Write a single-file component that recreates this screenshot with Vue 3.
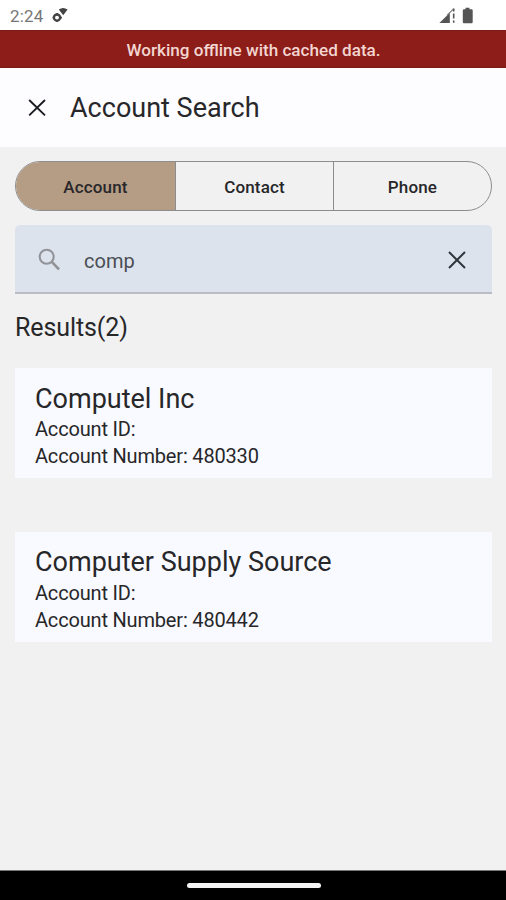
<script setup>
import { ref } from 'vue'

const tabs = ['Account', 'Contact', 'Phone']
const active = ref('Account')
const query = ref('comp')
const results = [
  { name: 'Computel Inc', id: '', number: '480330' },
  { name: 'Computer Supply Source', id: '', number: '480442' },
]
</script>

<template>
  <div class="screen">
    <div class="status">
      <span class="time">2:24</span>
      <svg class="tool" width="18" height="18" viewBox="0 0 18 18">
        <circle cx="6" cy="10.6" r="3.1" fill="none" stroke="#444" stroke-width="2.3" />
        <path d="M6 6v2M6 13v2M1.6 10.6h2M9 10.6h2" stroke="#444" stroke-width="1.6" />
        <path d="M7.8 2.6Q12 -.6 16.6 2.6L12.2 8.2Z" fill="#444" />
      </svg>
      <div class="spacer"></div>
      <svg class="signal" width="18" height="18" viewBox="0 0 18 18">
        <path d="M.4 16L10.8 5.8V16Z" fill="#555" />
        <path d="M8 8.4L14.6 1.8" stroke="#777" stroke-width="1.1" />
        <path d="M14.7 1.6v2.8M14.7 6.5v5M14.7 13.5v2.3" stroke="#555" stroke-width="1.6" />
      </svg>
      <svg class="battery" width="12" height="18" viewBox="0 0 12 18">
        <path d="M3.5 .8h4v1.5H9.5Q10.7 2.3 10.7 3.5V15Q10.7 16.2 9.5 16.2H2Q.8 16.2 .8 15V3.5Q.8 2.3 2 2.3H3.5Z" fill="#555" />
      </svg>
    </div>
    <div class="banner"><span>Working offline with cached data.</span></div>
    <header class="appbar">
      <svg width="18" height="18" viewBox="0 0 18 18">
        <path d="M1.2 1L17 16.4M17 1L1.2 16.4" stroke="#1b1c20" stroke-width="1.9" />
      </svg>
      <h1>Account Search</h1>
    </header>
    <main>
      <div class="tabs">
        <button v-for="t in tabs" :key="t" :class="{ active: t === active }" @click="active = t">{{ t }}</button>
      </div>
      <div class="search">
        <svg class="lens" width="24" height="24" viewBox="0 0 24 24">
          <circle cx="8.7" cy="8.7" r="7" fill="none" stroke="#919398" stroke-width="2.1" />
          <path d="M13.6 13.6L21 21.4" stroke="#919398" stroke-width="2.7" />
        </svg>
        <input v-model="query" type="text" />
        <svg class="clear" width="18" height="18" viewBox="0 0 18 18" @click="query = ''">
          <path d="M1 1L17 17M17 1L1 17" stroke="#30343c" stroke-width="2" />
        </svg>
      </div>
      <h2>Results({{ results.length }})</h2>
      <section v-for="r in results" :key="r.number" class="card">
        <h3>{{ r.name }}</h3>
        <p>Account ID: {{ r.id }}</p>
        <p>Account Number: {{ r.number }}</p>
      </section>
    </main>
    <footer><div class="handle"></div></footer>
  </div>
</template>

<style>
body {
  background: #f1f1f1;
}
</style>

<style scoped>
.screen {
  width: 506px;
  height: 900px;
  display: flex;
  flex-direction: column;
  overflow: hidden;
  background: #f1f1f1;
  color: #27272a;
  font-family: Roboto, sans-serif;
}
.screen * {
  box-sizing: border-box;
}
svg {
  display: block;
  flex: none;
}
.status {
  height: 30px;
  flex: none;
  display: flex;
  align-items: flex-start;
  padding: 7px 32px 0 10px;
  background: #fff;
}
.time {
  width: 41px;
  font-size: 17px;
  line-height: 18px;
  letter-spacing: 0.2px;
  color: #777;
}
.spacer {
  flex: 1;
}
.battery {
  margin-left: 5px;
}
.banner {
  height: 38px;
  flex: none;
  display: flex;
  align-items: center;
  justify-content: center;
  padding: 1px 0 0 1px;
  background: #8c1d18;
  border-top: 1px solid #7a1b17;
  border-bottom: 1px solid #7a1b17;
  color: #f3d5d1;
  font-size: 17.1px;
  font-weight: 500;
}
.appbar {
  height: 79px;
  flex: none;
  display: flex;
  align-items: center;
  gap: 24px;
  padding-left: 28px;
  background: #fdfcff;
}
h1, h2, h3, p {
  margin: 0;
  font-weight: 400;
}
h1 {
  font-size: 27px;
  line-height: 34px;
}
main {
  flex: 1;
  padding: 14px 14px 0 15px;
}
.tabs {
  height: 50px;
  display: grid;
  grid-template-columns: 160px 158px 1fr;
  border: 1px solid #8c8d8f;
  border-radius: 25px;
  overflow: hidden;
}
.tabs button {
  padding: 2px 0 0;
  border: 0;
  border-right: 1px solid #8c8d8f;
  background: transparent;
  color: #27272a;
  font: 500 17px Roboto, sans-serif;
  letter-spacing: 0.15px;
}
.tabs button:last-child {
  border-right: 0;
}
.tabs button.active {
  background: #b59c84;
}
.search {
  height: 69px;
  margin-top: 14px;
  display: flex;
  align-items: center;
  padding: 2px 26px 0 23px;
  background: #dde3ec;
  border-bottom: 2px solid #b9bcc4;
  border-radius: 5px 5px 0 0;
}
.search input {
  flex: 1;
  min-width: 0;
  margin-left: 22px;
  padding: 2px 0 0;
  border: 0;
  outline: 0;
  background: transparent;
  color: #4b4e55;
  font: 400 20px Roboto, sans-serif;
}
h2 {
  margin-top: 17px;
  margin-bottom: 23px;
  font-size: 25px;
  line-height: 34px;
  letter-spacing: -0.1px;
}
.card {
  height: 110px;
  padding: 14px 20px 0;
  background: #f9faff;
}
.card + .card {
  margin-top: 54px;
  padding-top: 13px;
}
h3 {
  font-size: 27px;
  line-height: 34px;
}
.card p {
  font-size: 20px;
  line-height: 26.5px;
  letter-spacing: -0.18px;
}
.card + .card h3 {
  margin-bottom: 1px;
}
footer {
  height: 30px;
  flex: none;
  display: flex;
  justify-content: center;
  align-items: center;
  padding-left: 1px;
  background: #000;
  border-top: 1px solid #777;
}
.handle {
  width: 134px;
  height: 5px;
  border-radius: 3px;
  background: #f3f3f3;
}
</style>
